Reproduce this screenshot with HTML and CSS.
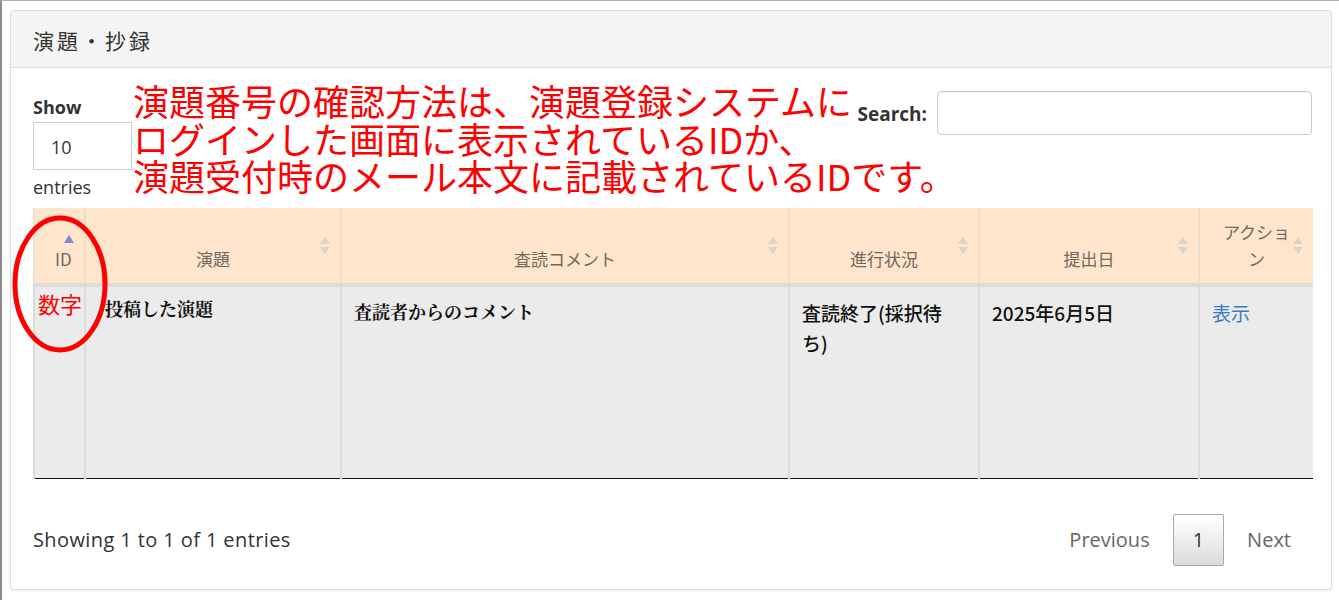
FILE: index.html
```html
<!DOCTYPE html>
<html lang="ja">

<head>
    <meta charset="UTF-8">
    <meta name="viewport" content="width=device-width, initial-scale=1.0">
    <title>演題・抄録</title>
    <link rel="stylesheet" href="styles.css">
</head>

<body>
    <div class="page">
        <div class="card">
            <div class="card-header">演題・抄録</div>

            <div class="card-body">
                <div class="table-controls">
                    <div class="length-box">
                        <span class="ctl-label">Show</span>
                        <div class="select-box">10</div>
                        <span class="entries-label">entries</span>
                    </div>
                    <div class="search-box">
                        <span class="ctl-label">Search:</span>
                        <div class="search-input"></div>
                    </div>
                </div>

                <table class="abstracts">
                    <colgroup>
                        <col style="width: 51px">
                        <col style="width: 256px">
                        <col style="width: 448px">
                        <col style="width: 190px">
                        <col style="width: 220px">
                        <col style="width: 114px">
                    </colgroup>
                    <thead>
                        <tr>
                            <th class="sort-asc">ID</th>
                            <th class="sortable">演題</th>
                            <th class="sortable">査読コメント</th>
                            <th class="sortable">進行状況</th>
                            <th class="sortable">提出日</th>
                            <th class="sortable">アクション</th>
                        </tr>
                    </thead>
                    <tbody>
                        <tr>
                            <td></td>
                            <td class="serif-cell title-cell">投稿した演題</td>
                            <td class="serif-cell">査読者からのコメント</td>
                            <td>査読終了(採択待ち)</td>
                            <td>2025年6月5日</td>
                            <td><a class="view-link" href="#">表示</a></td>
                        </tr>
                    </tbody>
                </table>

                <div class="table-footer">
                    <div class="info">Showing 1 to 1 of 1 entries</div>
                    <div class="pager">
                        <span class="page-btn">Previous</span>
                        <span class="page-btn current">1</span>
                        <span class="page-btn">Next</span>
                    </div>
                </div>
            </div>
        </div>

        <!-- annotations drawn over the screenshot -->
        <div class="note">
            <div>演題番号の確認方法は、演題登録システムに</div>
            <div>ログインした画面に表示されているIDか、</div>
            <div>演題受付時のメール本文に記載されているIDです。</div>
        </div>
        <svg class="id-circle" width="100" height="142" viewBox="0 0 100 142">
            <ellipse cx="49" cy="69" rx="45" ry="66" fill="none" stroke="#ff0000" stroke-width="5" />
        </svg>
        <div class="id-note">数字</div>
    </div>
</body>

</html>
```

FILE: styles.css
```css
body {
    margin: 0;
    padding: 0;
    background-color: #fff;
    font-family: 'Open Sans', 'Noto Sans CJK JP', sans-serif;
    color: #333;
}

.page {
    position: relative;
    min-height: 599px;
    border-left: 2px solid #8c8c8c;
    border-top: 1px solid #b0b0b0;
    padding: 9px 6px 0 8px;
}

.card {
    width: 1320px;
    border: 1px solid #ddd;
    border-radius: 4px;
    box-shadow: 0 1px 2px rgba(0, 0, 0, 0.08);
    background-color: #fff;
}

.card-header {
    height: 56px;
    line-height: 58px;
    padding: 0 22px;
    background-color: #f5f5f5;
    border-bottom: 1px solid #ddd;
    border-radius: 4px 4px 0 0;
    font-family: 'Noto Sans CJK JP', sans-serif;
    font-size: 21px;
    letter-spacing: 3px;
    color: #333;
}

.card-body {
    padding: 23px 19px 23px 22px;
}

.table-controls {
    display: flex;
    justify-content: space-between;
    align-items: flex-start;
}

.length-box {
    display: flex;
    flex-direction: column;
    align-items: flex-start;
    padding-top: 3px;
}

.ctl-label {
    font-weight: bold;
    font-size: 18px;
    line-height: 26px;
    color: #333;
}

.select-box {
    width: 80px;
    height: 46px;
    line-height: 48px;
    margin-top: 2px;
    padding-left: 17px;
    border: 1px solid #ccc;
    font-size: 18px;
    color: #333;
}

.entries-label {
    margin-top: 4px;
    font-size: 18px;
    line-height: 26px;
    color: #333;
}

.search-box {
    display: flex;
    align-items: center;
    gap: 10px;
}

.search-box .ctl-label {
    margin-top: 2px;
    font-size: 19px;
}

.search-input {
    width: 373px;
    height: 42px;
    border: 1px solid #ccc;
    border-radius: 4px;
    box-shadow: inset 0 1px 1px rgba(0, 0, 0, 0.06);
}

.abstracts {
    width: 100%;
    margin-top: 8px;
    table-layout: fixed;
    border-collapse: collapse;
    border-bottom: 1px solid #111;
}

.abstracts th {
    position: relative;
    height: 75px;
    box-sizing: border-box;
    padding: 10px 20px 11px;
    vertical-align: bottom;
    background-color: #fee5cb;
    border-left: 2px solid #eedccb;
    border-bottom: 4px solid #dcdcdc;
    font-family: 'Noto Sans CJK JP', sans-serif;
    font-weight: normal;
    font-size: 17px;
    line-height: 27px;
    color: #72685f;
    text-align: center;
}

.abstracts th:first-child {
    border-left: 2px solid #f0e0d0;
}

/* sort arrows */
.abstracts th.sortable::before,
.abstracts th.sortable::after,
.abstracts th.sort-asc::before {
    content: '';
    position: absolute;
    right: 10px;
    border-left: 5px solid transparent;
    border-right: 5px solid transparent;
}

.abstracts th.sortable::before {
    top: 29px;
    border-bottom: 7px solid #d9d3cc;
}

.abstracts th.sortable::after {
    top: 39px;
    border-top: 7px solid #d9d3cc;
}

.abstracts th.sort-asc::before {
    top: 27px;
    border-bottom: 8px solid #8585d6;
}

.abstracts td {
    height: 193px;
    box-sizing: border-box;
    padding: 11px 12px;
    vertical-align: top;
    background-color: #ebebeb;
    border-left: 2px solid #dcdcdc;
    font-family: 'Noto Sans CJK JP', sans-serif;
    font-weight: 500;
    font-size: 19px;
    line-height: 30px;
    color: #111;
}

.abstracts td.serif-cell {
    font-family: 'Noto Serif CJK JP', 'Noto Sans CJK JP', serif;
    font-weight: bold;
    font-size: 18px;
    padding-top: 9px;
}

.abstracts td.title-cell {
    padding-left: 19px;
    padding-top: 6px;
}

.view-link {
    color: #3a7bbf;
    text-decoration: none;
    font-weight: normal;
}

.table-footer {
    display: flex;
    justify-content: space-between;
    align-items: center;
    margin-top: 35px;
}

.info {
    font-size: 20px;
    letter-spacing: 0.4px;
    color: #333;
}

.pager {
    display: flex;
    gap: 2px;
}

.page-btn {
    height: 50px;
    line-height: 50px;
    padding: 0 20px;
    border: 1px solid transparent;
    border-radius: 2px;
    font-size: 20px;
    color: #666;
}

.page-btn.current {
    padding: 0 19px;
    color: #333;
    border-color: #aaa;
    background: linear-gradient(to bottom, #fff 0%, #dcdcdc 100%);
}

.note {
    position: absolute;
    left: 131px;
    top: 81px;
    font-family: 'Noto Sans CJK JP', sans-serif;
    font-size: 36px;
    line-height: 37.5px;
    color: #ff0000;
    white-space: nowrap;
}

.id-circle {
    position: absolute;
    left: 9px;
    top: 214px;
}

.id-note {
    position: absolute;
    left: 36px;
    top: 288px;
    font-family: 'Noto Sans CJK JP', sans-serif;
    font-size: 22px;
    line-height: 28px;
    color: #ff0000;
}
```
